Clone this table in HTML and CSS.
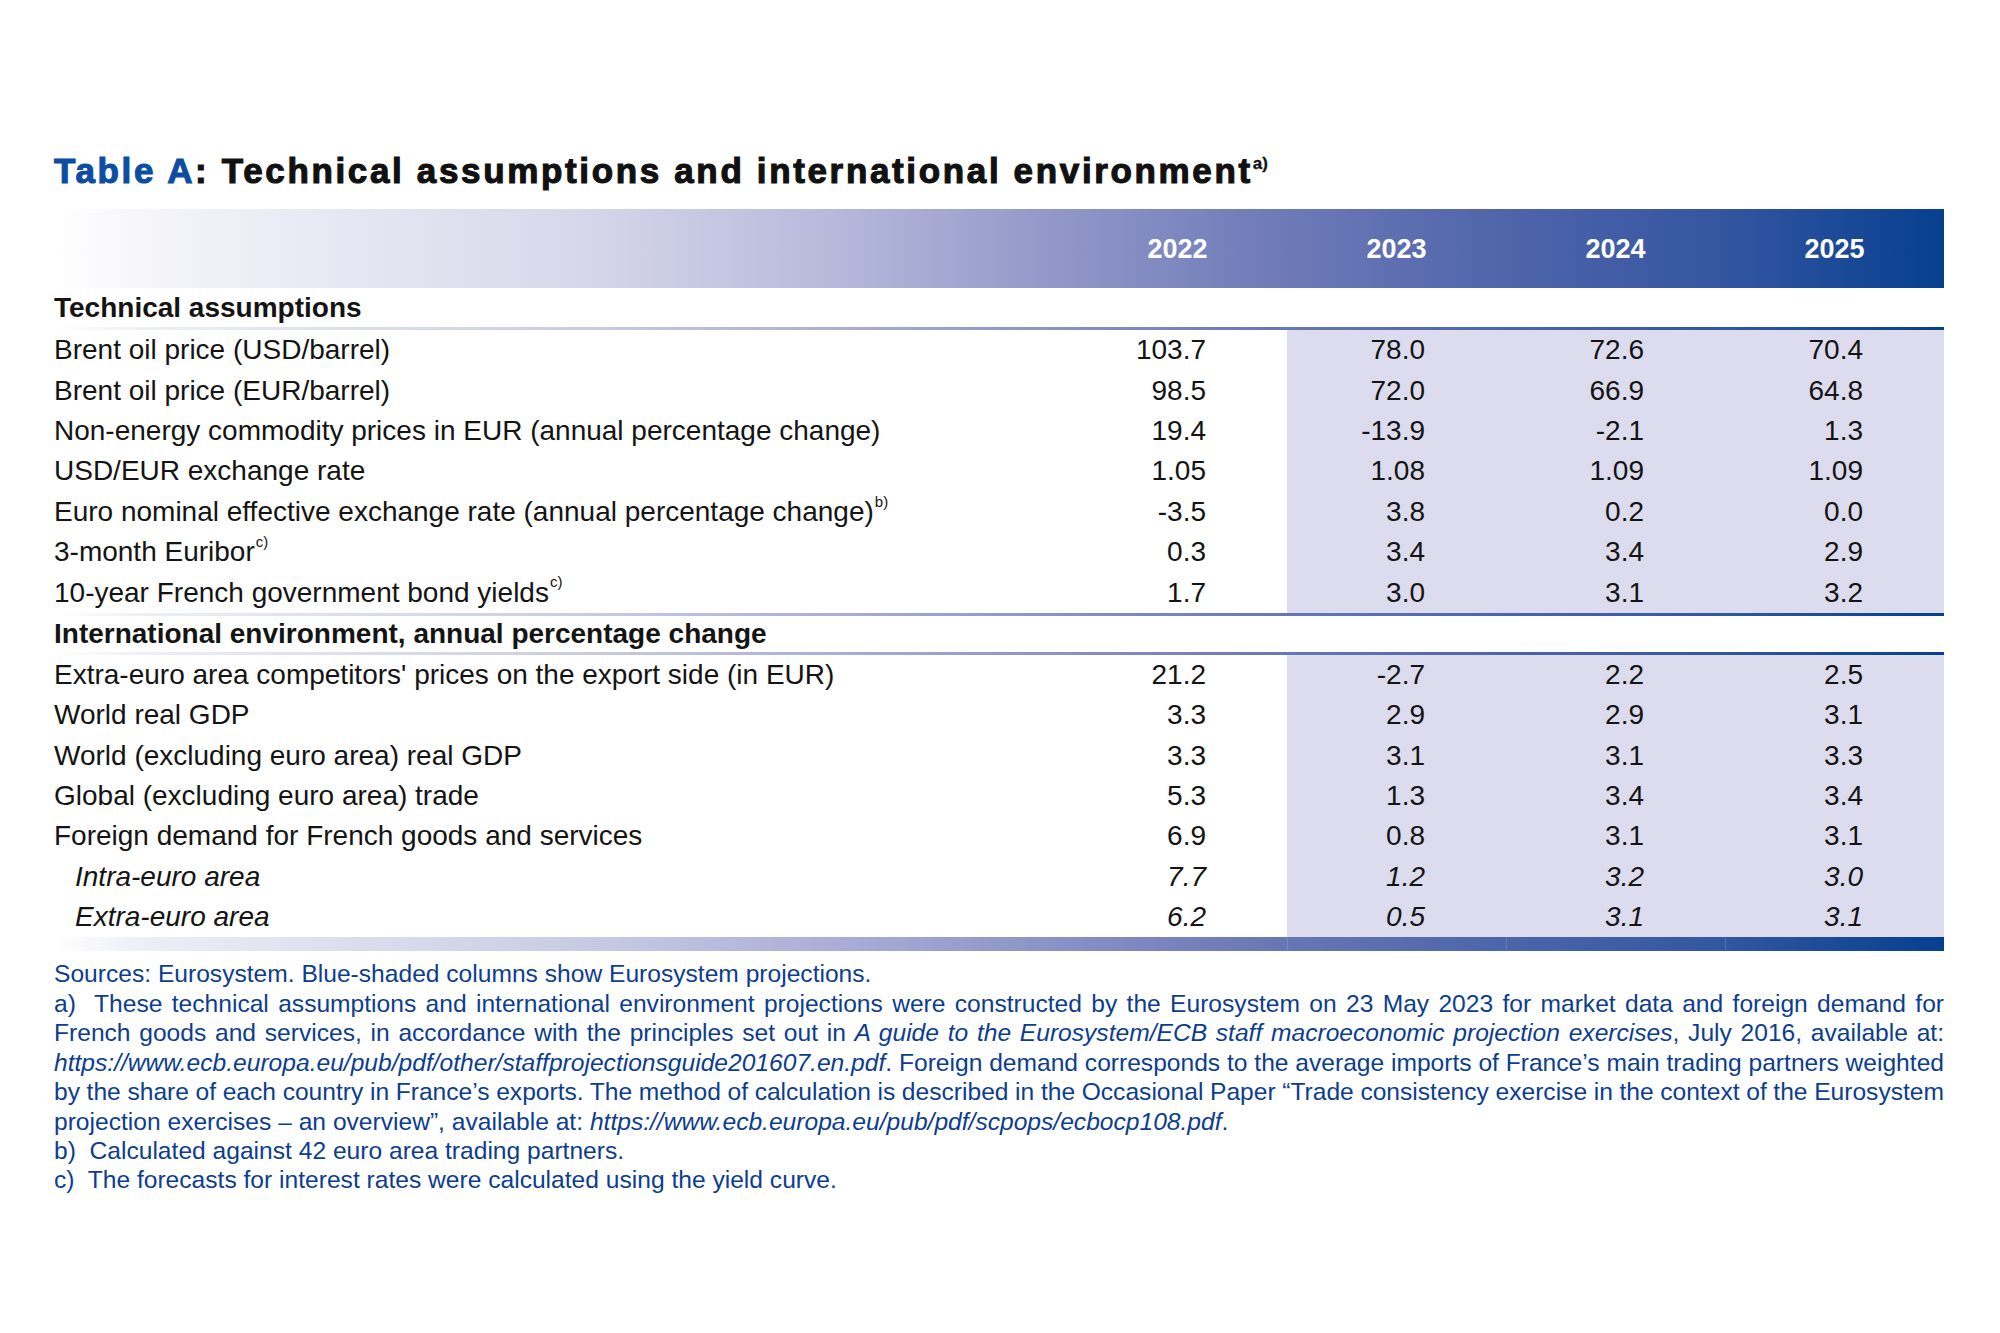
FILE: index.html
```html
<!DOCTYPE html>
<html lang="en">
<head>
<meta charset="utf-8">
<title>Table A</title>
<link rel="stylesheet" href="styles.css">
</head>
<body>
<div class="page">
  <h1 class="title"><span class="blue">Table A</span>: Technical assumptions and international environment<sup class="tsup">a)</sup></h1>
  <div class="tbl">
    <div class="row head">
      <div class="lab"></div>
      <div class="yr">2022</div>
      <div class="yr">2023</div>
      <div class="yr">2024</div>
      <div class="yr">2025</div>
    </div>
    <div class="row sect"><div class="lab">Technical assumptions</div></div>
    <div class="line"></div>
    <div class="row data"><div class="lab">Brent oil price (USD/barrel)</div><div class="n">103.7</div><div class="n p">78.0</div><div class="n p">72.6</div><div class="n p">70.4</div></div>
    <div class="row data"><div class="lab">Brent oil price (EUR/barrel)</div><div class="n">98.5</div><div class="n p">72.0</div><div class="n p">66.9</div><div class="n p">64.8</div></div>
    <div class="row data"><div class="lab">Non-energy commodity prices in EUR (annual percentage change)</div><div class="n">19.4</div><div class="n p">-13.9</div><div class="n p">-2.1</div><div class="n p">1.3</div></div>
    <div class="row data"><div class="lab">USD/EUR exchange rate</div><div class="n">1.05</div><div class="n p">1.08</div><div class="n p">1.09</div><div class="n p">1.09</div></div>
    <div class="row data"><div class="lab">Euro nominal effective exchange rate (annual percentage change)<sup class="fs">b)</sup></div><div class="n">-3.5</div><div class="n p">3.8</div><div class="n p">0.2</div><div class="n p">0.0</div></div>
    <div class="row data"><div class="lab">3-month Euribor<sup class="fs">c)</sup></div><div class="n">0.3</div><div class="n p">3.4</div><div class="n p">3.4</div><div class="n p">2.9</div></div>
    <div class="row data"><div class="lab">10-year French government bond yields<sup class="fs">c)</sup></div><div class="n">1.7</div><div class="n p">3.0</div><div class="n p">3.1</div><div class="n p">3.2</div></div>
    <div class="line"></div>
    <div class="row sect sect2"><div class="lab">International environment, annual percentage change</div></div>
    <div class="line"></div>
    <div class="row data"><div class="lab">Extra-euro area competitors' prices on the export side (in EUR)</div><div class="n">21.2</div><div class="n p">-2.7</div><div class="n p">2.2</div><div class="n p">2.5</div></div>
    <div class="row data"><div class="lab">World real GDP</div><div class="n">3.3</div><div class="n p">2.9</div><div class="n p">2.9</div><div class="n p">3.1</div></div>
    <div class="row data"><div class="lab">World (excluding euro area) real GDP</div><div class="n">3.3</div><div class="n p">3.1</div><div class="n p">3.1</div><div class="n p">3.3</div></div>
    <div class="row data"><div class="lab">Global (excluding euro area) trade</div><div class="n">5.3</div><div class="n p">1.3</div><div class="n p">3.4</div><div class="n p">3.4</div></div>
    <div class="row data"><div class="lab">Foreign demand for French goods and services</div><div class="n">6.9</div><div class="n p">0.8</div><div class="n p">3.1</div><div class="n p">3.1</div></div>
    <div class="row data it"><div class="lab sub">Intra-euro area</div><div class="n">7.7</div><div class="n p">1.2</div><div class="n p">3.2</div><div class="n p">3.0</div></div>
    <div class="row data it"><div class="lab sub">Extra-euro area</div><div class="n">6.2</div><div class="n p">0.5</div><div class="n p">3.1</div><div class="n p">3.1</div></div>
    <div class="row band"><div></div><div></div><div class="bc"></div><div class="bc"></div><div class="bc"></div></div>
  </div>
  <div class="notes">
    <p>Sources: Eurosystem. Blue-shaded columns show Eurosystem projections.</p>
    <p><span class="ln">a)&nbsp; These technical assumptions and international environment projections were constructed by the Eurosystem on 23 May 2023 for market data and foreign demand for</span><span class="ln">French goods and services, in accordance with the principles set out in <i>A guide to the Eurosystem/ECB staff macroeconomic projection exercises</i>, July 2016, available at:</span><span class="ln"><i>https://www.ecb.europa.eu/pub/pdf/other/staffprojectionsguide201607.en.pdf</i>. Foreign demand corresponds to the average imports of France’s main trading partners weighted</span><span class="ln">by the share of each country in France’s exports. The method of calculation is described in the Occasional Paper “Trade consistency exercise in the context of the Eurosystem</span><span class="ln last">projection exercises – an overview”, available at: <i>https://www.ecb.europa.eu/pub/pdf/scpops/ecbocp108.pdf</i>.</span></p>
    <p>b)&nbsp; Calculated against 42 euro area trading partners.</p>
    <p>c)&nbsp; The forecasts for interest rates were calculated using the yield curve.</p>
  </div>
</div>
</body>
</html>
```

FILE: styles.css
```css
html, body {
  margin: 0;
  padding: 0;
  background: #ffffff;
}

body {
  font-family: "Liberation Sans", Arial, sans-serif;
  color: #141414;
}

.page {
  width: 1890px;
  padding: 151px 0 0 54px;
}

.title {
  margin: 0;
  font-size: 35px;
  line-height: 40px;
  font-weight: 700;
  color: #111111;
  -webkit-text-stroke: 1.1px #111111;
  letter-spacing: 2.65px;
  height: 58px;
  white-space: nowrap;
}

.title .blue {
  color: #0c4da2;
  -webkit-text-stroke: 1.1px #0c4da2;
}

.tsup {
  font-size: 17px;
  vertical-align: 14px;
  line-height: 0;
  letter-spacing: 0;
  -webkit-text-stroke: 0.3px #111111;
}

.tbl {
  width: 1890px;
}

.row {
  display: grid;
  grid-template-columns: 1014px repeat(4, 219px);
}

.head {
  height: 79px;
  background: linear-gradient(90deg, #ffffff 0%, #f3f3f9 6%, #d6d7ea 28%, #b4b7da 42%, #9197c8 53%, #707cb8 64%, #5166ab 76%, #3556a1 88%, #05408f 100%);
  align-items: center;
}

.yr {
  color: #ffffff;
  font-weight: 700;
  font-size: 27px;
  text-align: center;
  padding-top: 2px;
}

.sect {
  height: 39px;
  align-items: center;
}

.sect2 {
  height: 36px;
}

.sect .lab {
  font-weight: 700;
  font-size: 28px;
  color: #141414;
}

.line {
  height: 3px;
  background: linear-gradient(90deg, #ffffff 0%, #eceef7 5%, #c9cbe5 28%, #a8acd6 42%, #8a92c6 53%, #6a78b6 64%, #4e66ab 76%, #3457a1 88%, #05408f 100%);
}

.data {
  height: 40.4px;
}

.data > div {
  display: flex;
  align-items: center;
  font-size: 28px;
  line-height: 1;
}

.lab {
  white-space: nowrap;
}

.n {
  justify-content: flex-end;
  padding-right: 81px;
}

.p {
  background: #dcdcee;
}

.it > div {
  font-style: italic;
}

.sub {
  padding-left: 21px;
}

.fs {
  font-size: 15px;
  line-height: 0;
  align-self: flex-start;
  margin-top: 10px;
  margin-left: 1px;
}

.band {
  height: 14px;
  background: linear-gradient(90deg, #ffffff 0%, #eceef7 5%, #c9cbe5 28%, #a8acd6 42%, #8a92c6 53%, #6a78b6 64%, #4e66ab 76%, #3457a1 88%, #05408f 100%);
}

.bc {
  border-left: 1px solid rgba(255, 255, 255, 0.15);
}

.notes {
  width: 1890px;
  margin-top: 8px;
  font-family: "Liberation Sans", Arial, sans-serif;
  font-size: 24.6px;
  line-height: 29.4px;
  color: #0c3d8f;
}

.notes p {
  margin: 0;
}

.ln {
  display: block;
  white-space: nowrap;
  word-spacing: -1.2px;
  text-align: justify;
  text-align-last: justify;
}

.ln.last {
  word-spacing: 0;
  text-align-last: left;
}
```
